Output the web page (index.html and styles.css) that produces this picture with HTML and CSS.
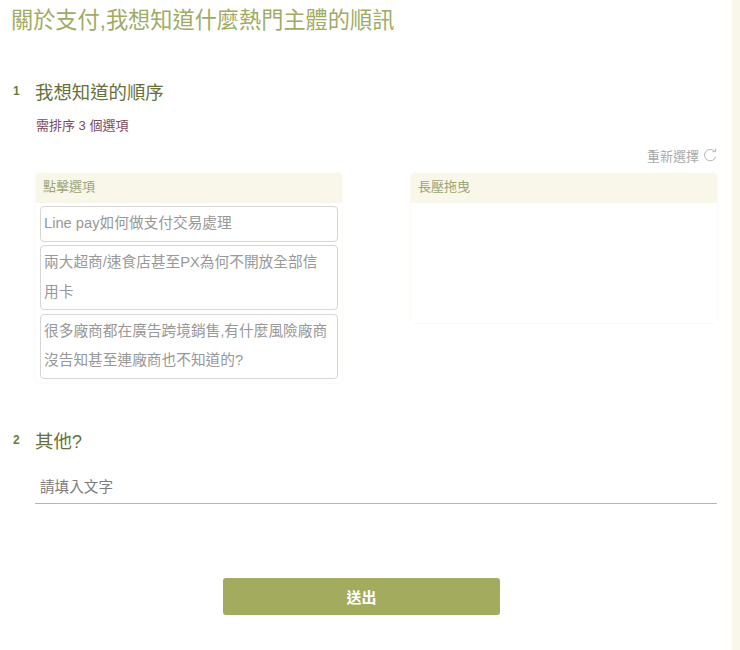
FILE: index.html
```html
<!DOCTYPE html>
<html lang="zh-TW">
  <head>
    <meta charset="utf-8">
    <title>關於支付</title>
    <link rel="stylesheet" href="styles.css">
  </head>
  <body>
    <main class="page">
      <h1 class="survey-title">關於支付,我想知道什麼熱門主體的順訊</h1>

      <section class="question question-rank">
        <div class="question-head">
          <span class="question-no">1</span>
          <h2 class="question-title">我想知道的順序</h2>
        </div>
        <p class="hint">需排序 3 個選項</p>
        <div class="reset">
          <span>重新選擇</span>
          <svg class="reset-icon" viewBox="0 0 14 14" width="14" height="14" fill="none" stroke="#b5b5b5" stroke-width="1">
            <path d="M11.4 3.2A5.7 5.7 0 1 0 12.7 8.8"/>
            <path d="M12.6 0.6V3.7H9.5"/>
          </svg>
        </div>
        <div class="rank-columns">
          <div class="rank-box">
            <div class="rank-label">點擊選項</div>
            <ul class="rank-list">
              <li class="rank-item">Line pay如何做支付交易處理</li>
              <li class="rank-item">兩大超商/速食店甚至PX為何不開放全部信用卡</li>
              <li class="rank-item">很多廠商都在廣告跨境銷售,有什麼風險廠商沒告知甚至連廠商也不知道的?</li>
            </ul>
          </div>
          <div class="rank-box rank-target">
            <div class="rank-label">長壓拖曳</div>
          </div>
        </div>
      </section>

      <section class="question question-other">
        <div class="question-head">
          <span class="question-no">2</span>
          <h2 class="question-title">其他?</h2>
        </div>
        <div class="text-field">請填入文字</div>
      </section>

      <div class="actions">
        <button class="submit" type="button">送出</button>
      </div>
    </main>
  </body>
</html>
```

FILE: styles.css
```css
* {
  box-sizing: border-box;
  margin: 0;
  padding: 0;
}

html, body {
  height: 100%;
}

body {
  background-color: #f8f7ea;
  font-family: "Liberation Sans", "Noto Sans CJK TC", sans-serif;
  overflow: hidden;
}

.page {
  width: 732px;
  height: 650px;
  background-color: #fff;
  padding: 7px 15px 0 11px;
}

.survey-title {
  font-size: 22.2px;
  line-height: 28px;
  font-weight: 400;
  color: #a0ab65;
}

.question-rank {
  margin-top: 44px;
}

.question-head {
  display: flex;
  align-items: center;
  padding-left: 2px;
}

.question-no {
  width: 22px;
  font-size: 12px;
  font-weight: 700;
  color: #6f7b3d;
  margin-top: -4px;
}

.question-title {
  font-size: 18.4px;
  line-height: 28px;
  font-weight: 400;
  color: #67703a;
}

.hint {
  margin: 10px 0 0 25px;
  font-size: 13px;
  line-height: 18px;
  color: #7b4a62;
}

.reset {
  display: flex;
  justify-content: flex-end;
  align-items: center;
  gap: 4px;
  margin-top: 11px;
  height: 18px;
  font-size: 13px;
  color: #a9a9a9;
}

.rank-columns {
  display: flex;
  justify-content: space-between;
  align-items: flex-start;
  margin: 9px 0 0 25px;
}

.rank-box {
  width: 306px;
  border-radius: 4px;
  box-shadow: 0 0 0 1px #fbfaf3;
}

.rank-target {
  height: 150px;
}

.rank-label {
  height: 30px;
  padding-left: 7px;
  font-size: 13px;
  line-height: 28px;
  color: #9da374;
  background-color: #f8f7ea;
  border-radius: 4px 4px 0 0;
}

.rank-list {
  list-style: none;
  padding: 3px 4px 4px;
}

.rank-item {
  padding: 2px 6px 2px 3px;
  font-size: 14.7px;
  line-height: 29.5px;
  color: #989898;
  background-color: #fff;
  border: 1px solid #d6d6d6;
  border-radius: 4px;
}

.rank-item + .rank-item {
  margin-top: 3.5px;
}

.question-other {
  margin-top: 45.5px;
}

.text-field {
  margin: 14px 0 0 24px;
  padding-left: 5px;
  height: 34px;
  font-size: 14.6px;
  line-height: 34px;
  color: #7d7d7d;
  border-bottom: 1px solid #b8bc94;
}

.actions {
  display: flex;
  justify-content: center;
  margin-top: 74px;
  padding-right: 5px;
}

.submit {
  width: 277px;
  height: 37px;
  font-family: inherit;
  font-size: 15px;
  font-weight: 700;
  color: #fff;
  background-color: #a3ab5e;
  border: none;
  border-radius: 3px;
}
```
